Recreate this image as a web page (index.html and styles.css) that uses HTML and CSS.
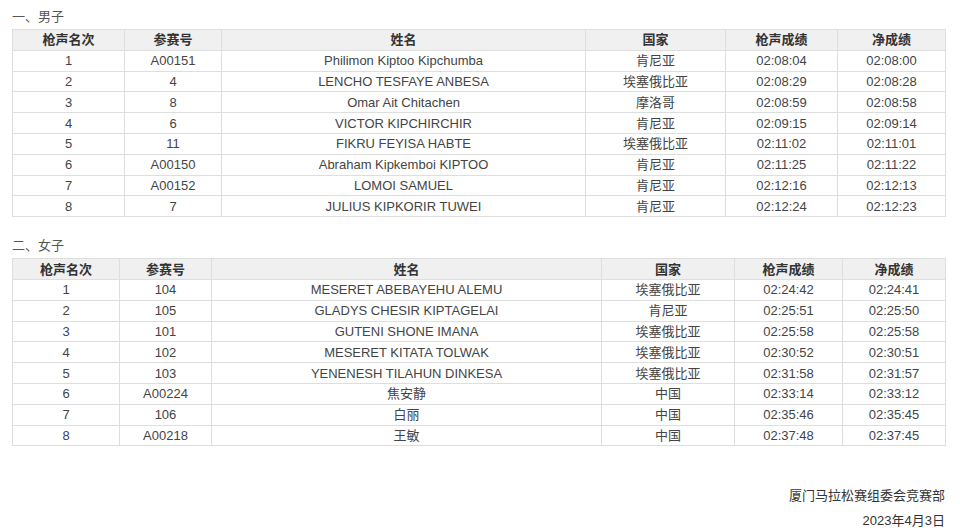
FILE: index.html
```html
<!DOCTYPE html>
<html lang="zh">
<head>
<meta charset="utf-8">
<title>成绩</title>
<link rel="stylesheet" href="styles.css">
</head>
<body>
<div class="page">
  <div class="sec-title">一、男子</div>
  <table class="res t1">
    <colgroup><col class="c1"><col class="c2"><col class="c3"><col class="c4"><col class="c5"><col class="c6"></colgroup>
    <thead><tr><th>枪声名次</th><th>参赛号</th><th>姓名</th><th>国家</th><th>枪声成绩</th><th>净成绩</th></tr></thead>
    <tbody>
      <tr><td>1</td><td>A00151</td><td>Philimon Kiptoo Kipchumba</td><td>肯尼亚</td><td>02:08:04</td><td>02:08:00</td></tr>
      <tr><td>2</td><td>4</td><td>LENCHO TESFAYE ANBESA</td><td>埃塞俄比亚</td><td>02:08:29</td><td>02:08:28</td></tr>
      <tr><td>3</td><td>8</td><td>Omar Ait Chitachen</td><td>摩洛哥</td><td>02:08:59</td><td>02:08:58</td></tr>
      <tr><td>4</td><td>6</td><td>VICTOR KIPCHIRCHIR</td><td>肯尼亚</td><td>02:09:15</td><td>02:09:14</td></tr>
      <tr><td>5</td><td>11</td><td>FIKRU FEYISA HABTE</td><td>埃塞俄比亚</td><td>02:11:02</td><td>02:11:01</td></tr>
      <tr><td>6</td><td>A00150</td><td>Abraham Kipkemboi KIPTOO</td><td>肯尼亚</td><td>02:11:25</td><td>02:11:22</td></tr>
      <tr><td>7</td><td>A00152</td><td>LOMOI SAMUEL</td><td>肯尼亚</td><td>02:12:16</td><td>02:12:13</td></tr>
      <tr><td>8</td><td>7</td><td>JULIUS KIPKORIR TUWEI</td><td>肯尼亚</td><td>02:12:24</td><td>02:12:23</td></tr>
    </tbody>
  </table>
  <div class="sec-title second">二、女子</div>
  <table class="res t2">
    <colgroup><col class="c1"><col class="c2"><col class="c3"><col class="c4"><col class="c5"><col class="c6"></colgroup>
    <thead><tr><th>枪声名次</th><th>参赛号</th><th>姓名</th><th>国家</th><th>枪声成绩</th><th>净成绩</th></tr></thead>
    <tbody>
      <tr><td>1</td><td>104</td><td>MESERET ABEBAYEHU ALEMU</td><td>埃塞俄比亚</td><td>02:24:42</td><td>02:24:41</td></tr>
      <tr><td>2</td><td>105</td><td>GLADYS CHESIR KIPTAGELAI</td><td>肯尼亚</td><td>02:25:51</td><td>02:25:50</td></tr>
      <tr><td>3</td><td>101</td><td>GUTENI SHONE IMANA</td><td>埃塞俄比亚</td><td>02:25:58</td><td>02:25:58</td></tr>
      <tr><td>4</td><td>102</td><td>MESERET KITATA TOLWAK</td><td>埃塞俄比亚</td><td>02:30:52</td><td>02:30:51</td></tr>
      <tr><td>5</td><td>103</td><td>YENENESH TILAHUN DINKESA</td><td>埃塞俄比亚</td><td>02:31:58</td><td>02:31:57</td></tr>
      <tr><td>6</td><td>A00224</td><td>焦安静</td><td>中国</td><td>02:33:14</td><td>02:33:12</td></tr>
      <tr><td>7</td><td>106</td><td>白丽</td><td>中国</td><td>02:35:46</td><td>02:35:45</td></tr>
      <tr><td>8</td><td>A00218</td><td>王敏</td><td>中国</td><td>02:37:48</td><td>02:37:45</td></tr>
    </tbody>
  </table>
  <div class="footer">
    <div class="f-line">厦门马拉松赛组委会竞赛部</div>
    <div class="f-line">2023年4月3日</div>
  </div>
</div>
</body>
</html>
```

FILE: styles.css
```css
html, body {
  margin: 0;
  padding: 0;
  background: #ffffff;
}
body {
  font-family: "Liberation Sans", Arial, "Noto Sans CJK SC", sans-serif;
  font-size: 13px;
  color: #444444;
}
.page {
  width: 933px;
  padding: 8px 0 0 12px;
}
.sec-title {
  height: 18px;
  line-height: 18px;
  margin-bottom: 3px;
  color: #555555;
}
.sec-title.second {
  margin-top: 20px;
}
.res {
  width: 933px;
  border-collapse: collapse;
  table-layout: fixed;
}
.res th, .res td {
  border: 1px solid #dedede;
  height: 19.8px;
  padding: 0;
  text-align: center;
  vertical-align: middle;
  line-height: 15px;
  white-space: nowrap;
}
.res th {
  background: #f0f0f0;
  font-weight: bold;
  color: #333333;
}
.t1 .c1 { width: 112px; }
.t1 .c2 { width: 97px; }
.t1 .c3 { width: 364px; }
.t1 .c4 { width: 140px; }
.t1 .c5 { width: 112px; }
.t1 .c6 { width: 108px; }
.t2 .c1 { width: 107px; }
.t2 .c2 { width: 92px; }
.t2 .c3 { width: 390px; }
.t2 .c4 { width: 133px; }
.t2 .c5 { width: 108px; }
.t2 .c6 { width: 103px; }
.footer {
  margin-top: 37px;
  text-align: right;
}
.f-line {
  line-height: 25px;
  color: #333333;
}
```
